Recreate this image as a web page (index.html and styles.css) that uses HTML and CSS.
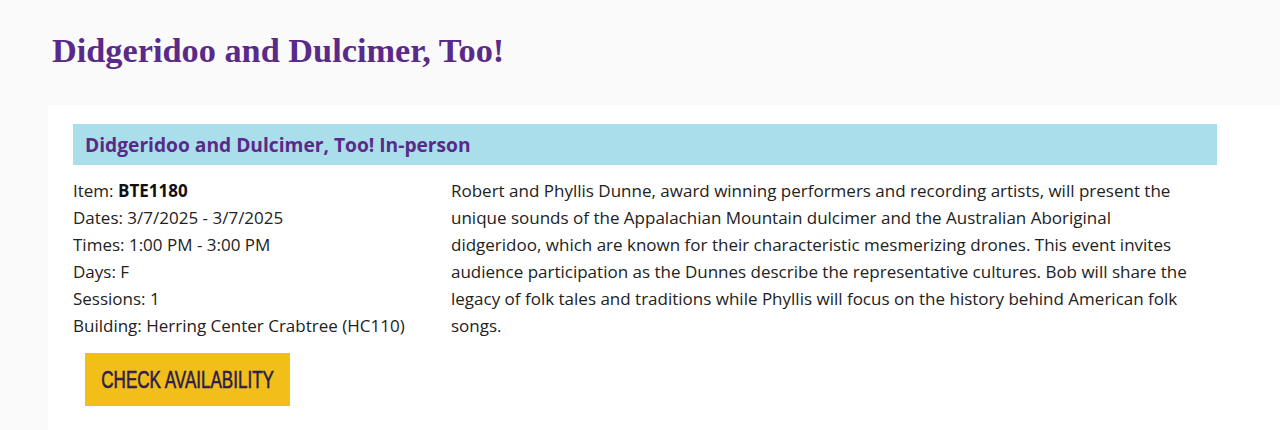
FILE: index.html
```html
<!DOCTYPE html>
<html lang="en">
<head>
<meta charset="utf-8">
<title>Didgeridoo and Dulcimer, Too!</title>
<link rel="stylesheet" href="styles.css">
</head>
<body>
<header class="page-head">
  <h1 class="page-title">Didgeridoo and Dulcimer, Too!</h1>
</header>
<main class="card">
  <h2 class="bar">Didgeridoo and Dulcimer, Too! In-person</h2>
  <div class="details">
    <div class="meta">
      <div>Item: <b>BTE1180</b></div>
      <div>Dates: 3/7/2025 - 3/7/2025</div>
      <div>Times: 1:00 PM - 3:00 PM</div>
      <div>Days: F</div>
      <div>Sessions: 1</div>
      <div>Building: Herring Center Crabtree (HC110)</div>
    </div>
    <p class="desc">Robert and Phyllis Dunne, award winning performers and recording artists, will present the unique sounds of the Appalachian Mountain dulcimer and the Australian Aboriginal didgeridoo, which are known for their characteristic mesmerizing drones. This event invites audience participation as the Dunnes describe the representative cultures. Bob will share the legacy of folk tales and traditions while Phyllis will focus on the history behind American folk songs.</p>
  </div>
  <a class="btn" href="#"><span class="btn-label">CHECK AVAILABILITY</span></a>
</main>
</body>
</html>
```
FILE: styles.css
```css
html, body {
  margin: 0;
  padding: 0;
}
body {
  background: #fafafa;
  font-family: "Open Sans", "Liberation Sans", sans-serif;
  color: #222;
  height: 430px;
  overflow: hidden;
}
.page-head {
  padding: 29px 0 0 52px;
  height: 105px;
  box-sizing: border-box;
}
.page-title {
  margin: 0;
  font-family: "Liberation Serif", "Times New Roman", serif;
  font-weight: bold;
  font-size: 34.3px;
  line-height: 42px;
  color: #5a2a8a;
}
.card {
  display: block;
  margin-left: 48px;
  background: #fff;
  padding: 19px 63px 30px 25px;
  height: 325px;
  box-sizing: border-box;
}
.bar {
  margin: 0;
  background: #aadeea;
  height: 41px;
  box-sizing: border-box;
  padding: 0 12px;
  display: flex;
  align-items: center;
  font-size: 19.2px;
  font-weight: bold;
  color: #5a2a8a;
}
.details {
  display: grid;
  grid-template-columns: 378px 749px;
  margin-top: 12px;
  font-size: 17px;
  line-height: 27px;
  color: #222;
}
.meta b {
  font-weight: bold;
  color: #111;
}
.desc {
  margin: 0;
}
.btn {
  display: flex;
  align-items: center;
  justify-content: center;
  margin: 14px 0 0 12px;
  width: 205px;
  height: 53px;
  background: #f2be1a;
  color: #2a1d4c;
  text-decoration: none;
  font-family: "Liberation Sans", sans-serif;
  font-size: 24px;
  overflow: hidden;
}
.btn-label {
  display: inline-block;
  white-space: nowrap;
  transform: scaleX(0.71);
  -webkit-text-stroke: 0.6px #2a1d4c;
}
```
